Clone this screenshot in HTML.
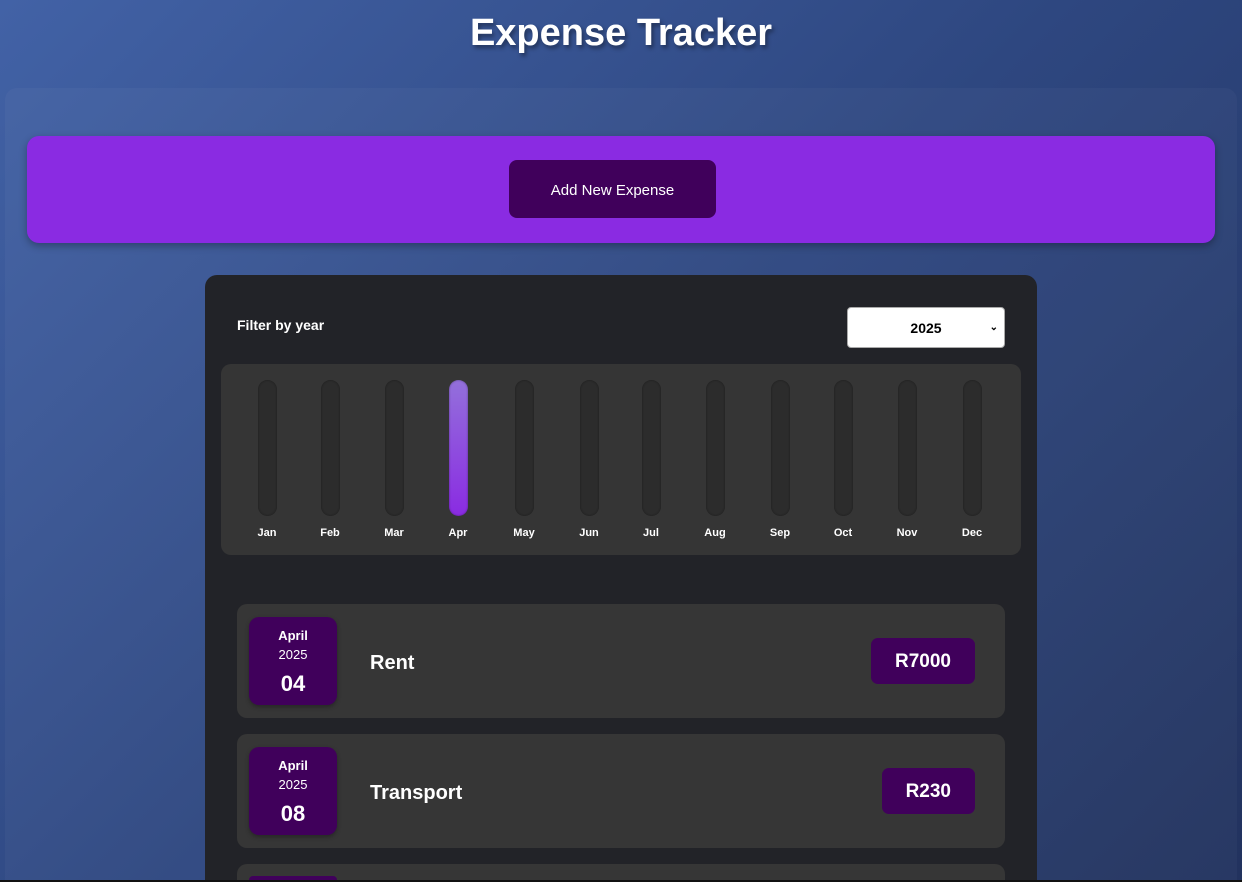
<!DOCTYPE html>
<html style="width:1242px;height:882px;overflow:hidden"><head><style>
*{box-sizing:border-box;margin:0;padding:0}
body{width:1242px;height:882px;overflow:hidden;font-family:"Liberation Sans",sans-serif;background:linear-gradient(135deg,#4262a6 0%,#2e4780 50%,#22325e 100%);position:relative;color:#fff}
h1{position:absolute;top:12px;left:0;width:1242px;text-align:center;font-size:38px;font-weight:bold;text-shadow:2px 3px 4px rgba(0,0,0,.4)}
.outer{position:absolute;left:5px;top:88px;width:1232px;height:794px;border-radius:12px 12px 0 0;background:rgba(255,255,255,.03)}
.add{position:absolute;left:27px;top:136px;width:1188px;height:107px;background:#8a2be2;border-radius:12px;box-shadow:0 3px 8px rgba(0,0,0,.3)}
.btn{position:absolute;left:482px;top:24px;width:207px;height:58px;background:#40005b;border-radius:8px;font-size:15px;line-height:62px;text-align:center}
.panel{position:absolute;left:205px;top:275px;width:832px;height:605px;background:#222328;border-radius:12px 12px 0 0;overflow:hidden}
.fl{position:absolute;left:32px;top:42px;font-size:14px;font-weight:bold}
.sel{position:absolute;left:642px;top:32px;width:158px;height:41px;background:#fff;border:1px solid #aaa;border-radius:4px;color:#000;font-weight:bold;font-size:14px;line-height:40px;text-align:center}
.sel span{position:absolute;right:6px;top:0;font-size:10px}
.chart{position:absolute;left:16px;top:89px;width:800px;height:191px;background:#353535;border-radius:10px}
.bar{position:absolute;top:16px;width:19px;height:136px;border-radius:10px;background:#2c2c2c;box-shadow:inset 0 0 2px rgba(0,0,0,.4)}
.bar.on{background:linear-gradient(#9370db,#8a2be2)}
.lb{position:absolute;top:163px;width:50px;text-align:center;font-size:11px;font-weight:bold}
.item{position:absolute;left:32px;width:768px;height:114px;background:#363636;border-radius:10px}
.date{position:absolute;left:12px;top:13px;width:88px;height:88px;background:#40005b;border-radius:10px;text-align:center;box-shadow:0 2px 5px rgba(0,0,0,.3)}
.m{font-size:13px;font-weight:bold;margin-top:11px}
.y{font-size:13px;margin-top:4px}
.d{font-size:22px;font-weight:bold;margin-top:9px}
.t{position:absolute;left:133px;top:48px;font-size:20px;font-weight:bold}
.amt{position:absolute;top:34px;right:30px;height:46px;padding:0 24px;background:#40005b;border-radius:7px;font-size:19px;font-weight:bold;line-height:48px}
.line{position:absolute;left:0;top:880px;width:1242px;height:2px;background:#111}
</style></head><body>
<h1>Expense Tracker</h1>
<div class="outer"></div>
<div class="add"><div class="btn">Add New Expense</div></div>
<div class="panel">
<div class="fl">Filter by year</div>
<div class="sel">2025<span>&#8964;</span></div>
<div class="chart">
<div class="bar" style="left:37px"></div><div class="lb" style="left:21px">Jan</div>
<div class="bar" style="left:100px"></div><div class="lb" style="left:84px">Feb</div>
<div class="bar" style="left:164px"></div><div class="lb" style="left:148px">Mar</div>
<div class="bar on" style="left:228px"></div><div class="lb" style="left:212px">Apr</div>
<div class="bar" style="left:294px"></div><div class="lb" style="left:278px">May</div>
<div class="bar" style="left:359px"></div><div class="lb" style="left:343px">Jun</div>
<div class="bar" style="left:421px"></div><div class="lb" style="left:405px">Jul</div>
<div class="bar" style="left:485px"></div><div class="lb" style="left:469px">Aug</div>
<div class="bar" style="left:550px"></div><div class="lb" style="left:534px">Sep</div>
<div class="bar" style="left:613px"></div><div class="lb" style="left:597px">Oct</div>
<div class="bar" style="left:677px"></div><div class="lb" style="left:661px">Nov</div>
<div class="bar" style="left:742px"></div><div class="lb" style="left:726px">Dec</div>
</div>
<div class="item" style="top:329px"><div class="date"><div class="m">April</div><div class="y">2025</div><div class="d">04</div></div><div class="t">Rent</div><div class="amt">R7000</div></div>
<div class="item" style="top:459px"><div class="date"><div class="m">April</div><div class="y">2025</div><div class="d">08</div></div><div class="t">Transport</div><div class="amt">R230</div></div>
<div class="item" style="top:589px;height:16px;border-radius:10px 10px 0 0"><div style="position:absolute;left:12px;top:12px;width:88px;height:4px;background:#40005b;border-radius:10px 10px 0 0"></div></div>
</div>
<div class="line"></div>
</body></html>
